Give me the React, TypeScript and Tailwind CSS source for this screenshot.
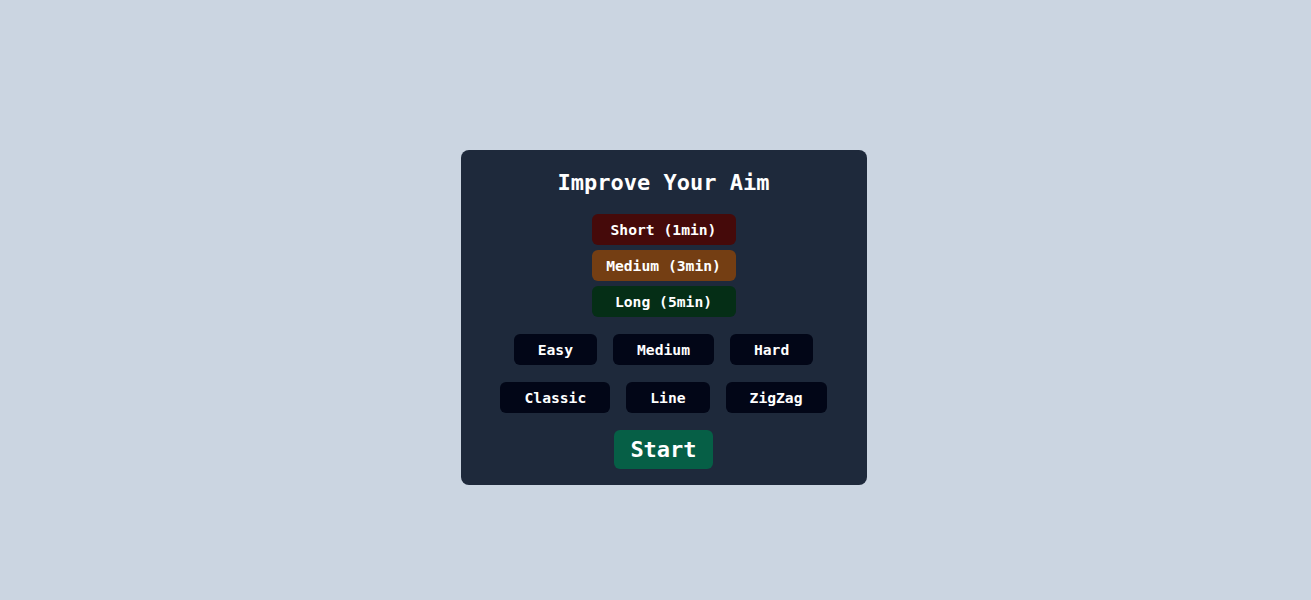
const durations = [
  { label: "Short (1min)", color: "bg-[#450a0a]" },
  { label: "Medium (3min)", color: "bg-[#743e13]" },
  { label: "Long (5min)", color: "bg-[#052e16]" },
]

const difficulties = ["Easy", "Medium", "Hard"]
const modes = ["Classic", "Line", "ZigZag"]

export default function App() {
  return (
    <div
      className="flex h-[600px] items-start justify-center bg-[#cbd5e1] pl-4 pt-[150px]"
      style={{ fontFamily: '"DejaVu Sans Mono", monospace' }}
    >
      <div className="flex w-[406px] flex-col items-center rounded-lg bg-[#1e293b] px-4 pb-4 pt-[17px] text-white">
        <h1 className="h-8 text-[22px] font-bold leading-8">Improve Your Aim</h1>

        <div className="mt-[15px] flex flex-col gap-[5px]">
          {durations.map((d) => (
            <button
              key={d.label}
              className={`h-[31px] w-[144px] rounded-md text-[14.67px] font-bold ${d.color}`}
            >
              {d.label}
            </button>
          ))}
        </div>

        <div className="mt-[17px] flex gap-4">
          {difficulties.map((d) => (
            <button key={d} className="h-[31px] rounded-md bg-[#020617] px-6 text-[14.67px] font-bold">
              {d}
            </button>
          ))}
        </div>

        <div className="mt-[17px] flex gap-4">
          {modes.map((m) => (
            <button key={m} className="h-[31px] rounded-md bg-[#020617] px-6 text-[14.67px] font-bold">
              {m}
            </button>
          ))}
        </div>

        <button className="mt-[17px] h-[39px] rounded-md bg-[#065f46] px-4 text-[22px] font-bold">
          Start
        </button>
      </div>
    </div>
  )
}
